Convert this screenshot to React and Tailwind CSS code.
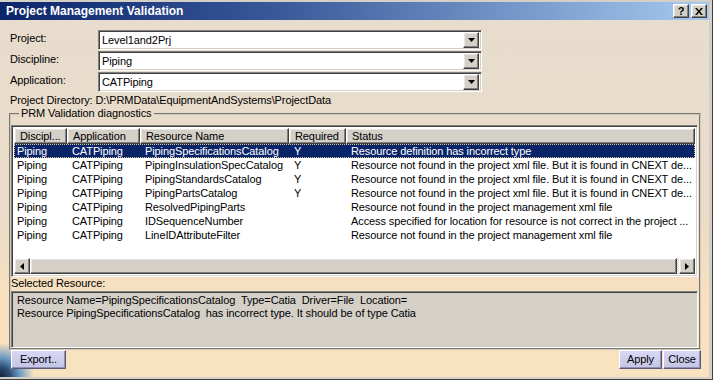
import React from "react";

const FONT = "font-['Liberation_Sans',Arial,sans-serif]";

const raised =
  "border border-t-white border-l-white border-r-[#404040] border-b-[#404040] shadow-[inset_-1px_-1px_#808080,inset_1px_1px_#e8e6e2]";
const sunken =
  "border border-t-[#808080] border-l-[#808080] border-r-white border-b-white shadow-[inset_1px_1px_#404040,inset_-1px_-1px_#d4d0c8]";

function DownArrow() {
  return (
    <svg width="7" height="4" viewBox="0 0 7 4">
      <path d="M0 0h7L3.5 4z" fill="#000" />
    </svg>
  );
}

function Combo({ value }) {
  return (
    <div className={`w-[384px] h-[20px] bg-white ${sunken} flex items-center p-[2px]`}>
      <div className="flex-1 pl-[1px] text-[11px] leading-[14px] text-black">{value}</div>
      <div className={`w-[16px] h-[16px] bg-[#d4d0c8] ${raised} flex items-center justify-center`}>
        <DownArrow />
      </div>
    </div>
  );
}

const COLS = ["w-[53px]", "w-[73px]", "w-[149px]", "w-[57px]", "flex-1"];
const HEAD = ["Discipl...", "Application", "Resource Name", "Required", "Status"];
const NF = "Resource not found in the project xml file. But it is found in CNEXT de...";
const ROWS = [
  ["Piping", "CATPiping", "PipingSpecificationsCatalog", "Y", "Resource definition has incorrect type"],
  ["Piping", "CATPiping", "PipingInsulationSpecCatalog", "Y", NF],
  ["Piping", "CATPiping", "PipingStandardsCatalog", "Y", NF],
  ["Piping", "CATPiping", "PipingPartsCatalog", "Y", NF],
  ["Piping", "CATPiping", "ResolvedPipingParts", "", "Resource not found in the project management xml file"],
  ["Piping", "CATPiping", "IDSequenceNumber", "", "Access specified for location for resource is not correct in the project ..."],
  ["Piping", "CATPiping", "LineIDAttributeFilter", "", "Resource not found in the project management xml file"],
];

function Button({ children, className = "" }) {
  return (
    <div
      className={`h-[19px] flex items-center justify-center text-[11px] text-black bg-[linear-gradient(#d8d8f4,#c4c4e6)] border border-t-white border-l-white border-r-[#5a5a78] border-b-[#5a5a78] shadow-[inset_-1px_-1px_#9090b4] ${className}`}
    >
      {children}
    </div>
  );
}

export default function App() {
  return (
    <div className={`w-[713px] h-[380px] overflow-hidden bg-[#d4d0c8] ${FONT} text-[11px] tracking-[-0.1px] text-black`}>
      <div className="w-[713px] h-[380px] pt-[2px] pr-[3px] pb-[2px] border-r border-b border-[#404040] flex flex-col">
        {/* Title bar */}
        <div className="h-[18px] shrink-0 flex items-center bg-[linear-gradient(90deg,#0a246a,#3a5a9a_40%,#a6caf0)] pl-[6px] pr-[2px]">
          <div className="flex-1 text-white font-bold text-[12px] tracking-normal leading-[14px]">Project Management Validation</div>
          <div className={`w-[16px] h-[14px] bg-[#d4d0c8] ${raised} flex items-center justify-center font-bold text-[11px] leading-none`}>?</div>
          <div className={`ml-[2px] w-[16px] h-[14px] bg-[#d4d0c8] ${raised} flex items-center justify-center`}>
            <svg width="8" height="7" viewBox="0 0 8 7">
              <path d="M0 0h2l2 2.5L6 0h2L5 3.5 8 7H6L4 4.5 2 7H0l3-3.5z" fill="#000" />
            </svg>
          </div>
        </div>

        {/* Body */}
        <div className="flex-1 flex flex-col bg-[radial-gradient(circle_at_0%_100%,#141e2e_0,#2c4d74_10px,#6f9cc4_20px,rgba(200,200,210,0)_34px),linear-gradient(180deg,#e7dccd_0%,#eadcc8_55%,#f6e0c0_75%,#f8e2bf_100%)] pl-[9px]">
          {/* Form */}
          <div className="pt-[10px] flex flex-col gap-[1px]">
            {[
              ["Project:", "Level1and2Prj"],
              ["Discipline:", "Piping"],
              ["Application:", "CATPiping"],
            ].map(([l, v]) => (
              <div key={l} className="flex items-start">
                <div className="w-[89px] pl-[1px] pt-[1px] leading-[14px]">{l}</div>
                <Combo value={v} />
              </div>
            ))}
          </div>
          <div className="pl-[1px] h-[14px] leading-[14px] mt-[1px]">
            Project Directory: D:\PRMData\EquipmentAndSystems\ProjectData
          </div>

          {/* Group box */}
          <fieldset className="w-[692px] border-2 [border-style:groove] border-[#cfc8bc] pr-[1px] flex flex-col">
            <legend className="ml-[8px] px-[2px] leading-[13px]">PRM Validation diagnostics</legend>
            {/* List */}
            <div className={`mt-[5px] h-[152px] bg-white ${sunken} p-[2px] flex flex-col`}>
              <div className="flex h-[16px] shrink-0">
                {HEAD.map((h, i) => (
                  <div
                    key={h}
                    className={`${COLS[i]} h-[16px] bg-[#d4d0c8] ${raised} pl-[5px] leading-[14px] overflow-hidden whitespace-nowrap`}
                  >
                    {h}
                  </div>
                ))}
              </div>
              <div className="flex-1 flex flex-col">
                {ROWS.map((r, ri) => (
                  <div
                    key={ri}
                    className={`flex h-[14px] leading-[12px] ${
                      ri === 0 ? "bg-[#0a246a] text-white border border-dotted border-[#d8c890]" : "border border-transparent"
                    }`}
                  >
                    {r.map((c, ci) => (
                      <div
                        key={ci}
                        className={`${COLS[ci]} ${ci === 0 ? "pl-[2px]" : "pl-[4px]"} overflow-hidden whitespace-nowrap`}
                      >
                        {c}
                      </div>
                    ))}
                  </div>
                ))}
              </div>
              {/* Horizontal scrollbar */}
              <div className="h-[16px] shrink-0 flex bg-[repeating-conic-gradient(#ffffff_0_25%,#d4d0c8_0_50%)] bg-[length:2px_2px]">
                <div className={`w-[16px] h-[16px] bg-[#d4d0c8] ${raised} flex items-center justify-center`}>
                  <svg width="4" height="7" viewBox="0 0 4 7">
                    <path d="M4 0v7L0 3.5z" fill="#000" />
                  </svg>
                </div>
                <div className={`w-[647px] h-[16px] bg-[#d4d0c8] ${raised}`} />
                <div className="flex-1" />
                <div className={`w-[16px] h-[16px] bg-[#d4d0c8] ${raised} flex items-center justify-center`}>
                  <svg width="4" height="7" viewBox="0 0 4 7">
                    <path d="M0 0v7L4 3.5z" fill="#000" />
                  </svg>
                </div>
              </div>
            </div>
            <div className="h-[14px] leading-[13px]">Selected Resource:</div>
            <div className={`h-[57px] bg-[#d4d0c8] ${sunken} pt-[2px] pl-[5px] leading-[13px]`}>
              <div>Resource Name=PipingSpecificationsCatalog&nbsp; Type=Catia&nbsp; Driver=File&nbsp; Location=</div>
              <div>Resource PipingSpecificationsCatalog&nbsp; has incorrect type. It should be of type Catia</div>
            </div>
          </fieldset>

          {/* Buttons */}
          <div className="flex items-start pl-[2px] pr-[8px]">
            <Button className="w-[55px]">Export..</Button>
            <div className="flex-1" />
            <Button className="w-[43px]">Apply</Button>
            <Button className="w-[38px] ml-[1px]">Close</Button>
          </div>
        </div>
      </div>
    </div>
  );
}
